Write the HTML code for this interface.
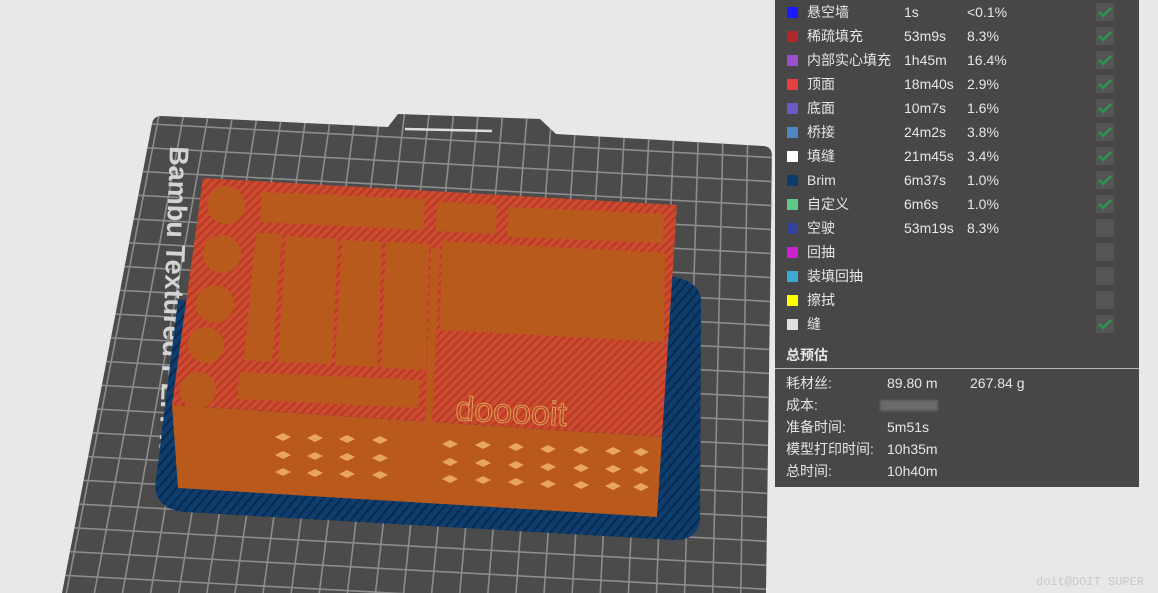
<!DOCTYPE html>
<html><head><meta charset="utf-8"><style>
body{margin:0;width:1158px;height:593px;overflow:hidden;background:#e8e8e8;position:relative;font-family:"Liberation Sans","Noto Sans CJK SC",sans-serif}
#panel{position:absolute;left:775px;top:0;width:364px;height:487px;background:#474747;color:#e6e6e6;font-size:14px}
.r{position:absolute;left:0;height:24px;width:364px;line-height:24px}
.sw{position:absolute;left:12px;top:7px;width:11px;height:11px}
.n{position:absolute;left:32px}.t{position:absolute;left:129px}.p{position:absolute;left:192px}
.cb{position:absolute;left:321px;top:3px;width:18px;height:18px;background:#555}
.cb svg{position:absolute;left:2px;top:3px}
.s{position:absolute;left:11px;height:22px;line-height:22px;width:350px}
.s .v{position:absolute;left:101px}.s .w{position:absolute;left:184px}
#wm{position:absolute;left:1036px;top:575px;font-family:"Liberation Mono",monospace;font-size:12px;color:#c8c8c8}
</style></head><body>
<svg width="775" height="593" style="position:absolute;left:0;top:0">
<defs>
<clipPath id="pc"><path d="M152,124 Q153,116 162,116 L388,127 L398,114 L540,119 L556,134 L764,146 Q772,147 772,156 L766,593 L62,593 Z"/></clipPath>
<pattern id="st" width="6" height="6" patternUnits="userSpaceOnUse" patternTransform="rotate(45)"><rect width="6" height="6" fill="#d04a30"/><rect width="2.5" height="6" fill="#b53c26"/></pattern>
<pattern id="bs" width="7" height="7" patternUnits="userSpaceOnUse" patternTransform="rotate(40)"><rect width="7" height="7" fill="#0e3d6e"/><rect width="2" height="7" fill="#072a50"/></pattern>
</defs>
<path d="M152,124 Q153,116 162,116 L388,127 L398,114 L540,119 L556,134 L764,146 Q772,147 772,156 L766,593 L62,593 Z" fill="#4a4b4a"/>
<g clip-path="url(#pc)" stroke="#8d8d8d" stroke-width="1.6" id="grid"></g>
<path d="M405,129 L492,131" stroke="#ddd" stroke-width="2.5"/>
<text transform="translate(170,146) rotate(92)" font-size="27" font-weight="bold" fill="#d4d4d4" font-family="Liberation Sans">Bambu Textured PEI Plate</text>
<path d="M178,300 L660,275 Q700,278 701,300 L700,520 Q698,540 675,540 L185,512 Q158,510 155,488 Z" fill="url(#bs)"/>
<path d="M172,405 L662,437 L657,517 L178,488 Z" fill="#b9591b"/>
<path d="M203,178 L677,205 L662,437 L172,405 Z" fill="url(#st)"/>
<g fill="#b85a1c">
<circle cx="226" cy="205" r="19"/><circle cx="222" cy="254" r="19"/><circle cx="215" cy="304" r="19"/><circle cx="206" cy="345" r="18"/><circle cx="198" cy="390" r="18"/>
<path d="M262,192 L425,199 L423,230 L260,222Z"/><path d="M437,202 L497,205 L496,234 L436,231Z"/><path d="M508,207 L664,214 L663,243 L507,237Z"/>
<path d="M442,241 L665,253 L664,342 L440,330Z"/>
<path d="M256,233 L282,234 L272,362 L244,360Z"/><path d="M286,236 L338,239 L332,364 L278,362Z"/><path d="M342,240 L382,242 L377,367 L335,365Z"/><path d="M386,242 L429,244 L426,370 L381,368Z"/>
<path d="M240,372 L420,380 L418,408 L237,399Z"/>
<path d="M431,248 L440,249 L432,422 L425,422Z"/>
</g>
<text x="455" y="420" font-size="34" fill="none" stroke="#d9a050" stroke-width="1" transform="rotate(3 455 420)">dooooit</text>
<g fill="#e8a560">
<g id="dm"><path d="M275,437 l8,-4 l8,4 l-8,4z"/><path d="M275,455 l8,-4 l8,4 l-8,4z"/><path d="M275,472 l8,-4 l8,4 l-8,4z"/></g>
<use href="#dm" x="32" y="1"/><use href="#dm" x="64" y="2"/><use href="#dm" x="97" y="3"/>
<use href="#dm" x="167" y="7"/><use href="#dm" x="200" y="8"/><use href="#dm" x="233" y="10"/><use href="#dm" x="265" y="12"/><use href="#dm" x="298" y="13"/><use href="#dm" x="330" y="14"/><use href="#dm" x="358" y="15"/>
</g>
</svg>
<div id="panel">
<div class="r" style="top:0"><div class="sw" style="background:#1a1aff"></div><span class="n">悬空墙</span><span class="t">1s</span><span class="p">&lt;0.1%</span><div class="cb"><svg width="14" height="12"><path d="M1,6 L5,10 L13,2" stroke="#1fa04a" stroke-width="2.2" fill="none"/></svg></div></div>
<div class="r" style="top:24px"><div class="sw" style="background:#b02828"></div><span class="n">稀疏填充</span><span class="t">53m9s</span><span class="p">8.3%</span><div class="cb"><svg width="14" height="12"><path d="M1,6 L5,10 L13,2" stroke="#1fa04a" stroke-width="2.2" fill="none"/></svg></div></div>
<div class="r" style="top:48px"><div class="sw" style="background:#9a4fd0"></div><span class="n">内部实心填充</span><span class="t">1h45m</span><span class="p">16.4%</span><div class="cb"><svg width="14" height="12"><path d="M1,6 L5,10 L13,2" stroke="#1fa04a" stroke-width="2.2" fill="none"/></svg></div></div>
<div class="r" style="top:72px"><div class="sw" style="background:#e84040"></div><span class="n">顶面</span><span class="t">18m40s</span><span class="p">2.9%</span><div class="cb"><svg width="14" height="12"><path d="M1,6 L5,10 L13,2" stroke="#1fa04a" stroke-width="2.2" fill="none"/></svg></div></div>
<div class="r" style="top:96px"><div class="sw" style="background:#6a5ac8"></div><span class="n">底面</span><span class="t">10m7s</span><span class="p">1.6%</span><div class="cb"><svg width="14" height="12"><path d="M1,6 L5,10 L13,2" stroke="#1fa04a" stroke-width="2.2" fill="none"/></svg></div></div>
<div class="r" style="top:120px"><div class="sw" style="background:#4f86c6"></div><span class="n">桥接</span><span class="t">24m2s</span><span class="p">3.8%</span><div class="cb"><svg width="14" height="12"><path d="M1,6 L5,10 L13,2" stroke="#1fa04a" stroke-width="2.2" fill="none"/></svg></div></div>
<div class="r" style="top:144px"><div class="sw" style="background:#ffffff"></div><span class="n">填缝</span><span class="t">21m45s</span><span class="p">3.4%</span><div class="cb"><svg width="14" height="12"><path d="M1,6 L5,10 L13,2" stroke="#1fa04a" stroke-width="2.2" fill="none"/></svg></div></div>
<div class="r" style="top:168px"><div class="sw" style="background:#0c3c6c"></div><span class="n">Brim</span><span class="t">6m37s</span><span class="p">1.0%</span><div class="cb"><svg width="14" height="12"><path d="M1,6 L5,10 L13,2" stroke="#1fa04a" stroke-width="2.2" fill="none"/></svg></div></div>
<div class="r" style="top:192px"><div class="sw" style="background:#5ec88a"></div><span class="n">自定义</span><span class="t">6m6s</span><span class="p">1.0%</span><div class="cb"><svg width="14" height="12"><path d="M1,6 L5,10 L13,2" stroke="#1fa04a" stroke-width="2.2" fill="none"/></svg></div></div>
<div class="r" style="top:216px"><div class="sw" style="background:#33429a"></div><span class="n">空驶</span><span class="t">53m19s</span><span class="p">8.3%</span><div class="cb"></div></div>
<div class="r" style="top:240px"><div class="sw" style="background:#cc22cc"></div><span class="n">回抽</span><div class="cb"></div></div>
<div class="r" style="top:264px"><div class="sw" style="background:#3ea8d0"></div><span class="n">装填回抽</span><div class="cb"></div></div>
<div class="r" style="top:288px"><div class="sw" style="background:#ffff00"></div><span class="n">擦拭</span><div class="cb"></div></div>
<div class="r" style="top:312px"><div class="sw" style="background:#e0e0e0"></div><span class="n">缝</span><div class="cb"><svg width="14" height="12"><path d="M1,6 L5,10 L13,2" stroke="#1fa04a" stroke-width="2.2" fill="none"/></svg></div></div>
<div style="position:absolute;left:11px;top:345px;font-weight:bold;font-size:14px">总预估</div>
<div style="position:absolute;left:0;top:368px;width:364px;height:1px;background:#b5b5b5"></div>
<div class="s" style="top:372px">耗材丝:<span class="v">89.80 m</span><span class="w">267.84 g</span></div>
<div class="s" style="top:394px">成本:<span style="position:absolute;left:94px;top:6px;width:58px;height:11px;background:#6a6a6a;filter:blur(1px)"></span></div>
<div class="s" style="top:416px">准备时间:<span class="v">5m51s</span></div>
<div class="s" style="top:438px">模型打印时间:<span class="v">10h35m</span></div>
<div class="s" style="top:460px">总时间:<span class="v">10h40m</span></div>
</div>
<div id="wm">doit@DOIT SUPER</div>
<script>
var g=document.getElementById('grid'),s='';
for(var i=0;i<30;i++){var y0=130+i*24;s+='<line x1="40" y1="'+(y0-12)+'" x2="780" y2="'+(y0+28)+'"/>';}
for(var i=-3;i<28;i++){var xt=160+i*24.5,lean=-95*(1-i/26);s+='<line x1="'+xt+'" y1="110" x2="'+(xt+lean)+'" y2="600"/>';}
g.innerHTML=s;
</script>
</body></html>
